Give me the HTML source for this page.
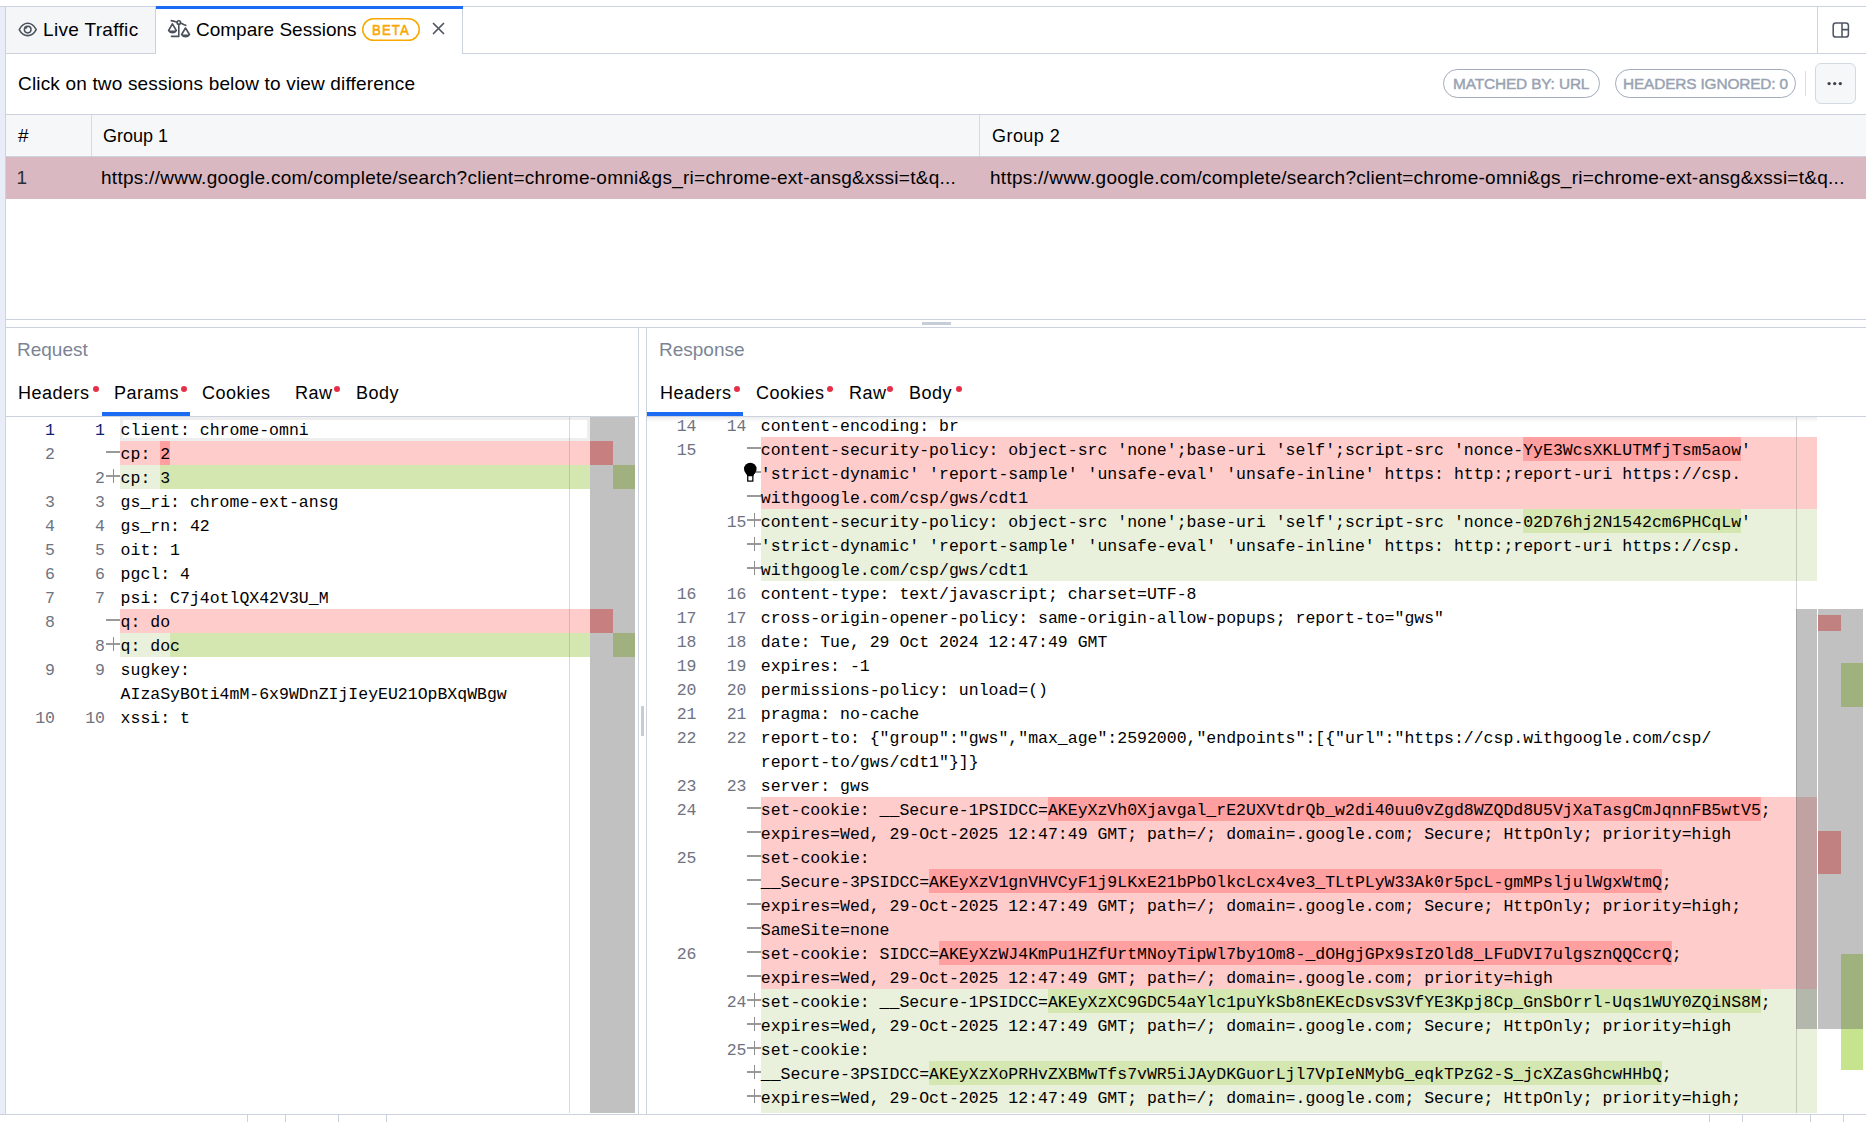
<!DOCTYPE html>
<html><head><meta charset="utf-8"><style>
html,body{margin:0;padding:0;}
body{width:1866px;height:1122px;position:relative;overflow:hidden;background:#fff;font-family:'Liberation Sans', sans-serif;}
body div, body svg{position:absolute;}
.t{white-space:pre;}
</style></head><body>
<div style="left:0px;top:6px;width:1866px;height:1px;background:#cdd3de;"></div>
<div style="left:0px;top:7px;width:5px;height:1107px;background:#e8edf7;"></div>
<div style="left:5px;top:7px;width:1px;height:1107px;background:#cdd3de;"></div>
<div style="left:0px;top:1114px;width:1866px;height:1px;background:#cdd3de;"></div>
<div style="left:247px;top:1115px;width:1px;height:7px;background:#cdd3de;"></div>
<div style="left:285px;top:1115px;width:1px;height:7px;background:#cdd3de;"></div>
<div style="left:338px;top:1115px;width:1px;height:7px;background:#cdd3de;"></div>
<div style="left:386px;top:1115px;width:1px;height:7px;background:#cdd3de;"></div>
<div style="left:1709px;top:1115px;width:1px;height:7px;background:#cdd3de;"></div>
<div style="left:1742px;top:1115px;width:1px;height:7px;background:#cdd3de;"></div>
<div style="left:1810px;top:1115px;width:1px;height:7px;background:#cdd3de;"></div>
<div style="left:1843px;top:1115px;width:1px;height:7px;background:#cdd3de;"></div>
<div style="left:6px;top:7px;width:149px;height:46px;background:#f5f6f8;"></div>
<div style="left:155px;top:7px;width:1px;height:47px;background:#cdd3de;"></div>
<div style="left:6px;top:53px;width:149px;height:1px;background:#cdd3de;"></div>
<div style="left:463px;top:53px;width:1403px;height:1px;background:#cdd3de;"></div>
<div style="left:156px;top:6px;width:307px;height:3px;background:#1b6cf2;"></div>
<div style="left:462px;top:9px;width:1px;height:45px;background:#cdd3de;"></div>
<div style="left:1817px;top:7px;width:1px;height:46px;background:#cdd3de;"></div>
<svg style="left:14px;top:18px" width="28" height="22" viewBox="14 18 28 22"><path d="M19.2 29.6 C21.5 25.3 24.3 23.3 27.7 23.3 C31.1 23.3 33.9 25.3 36.2 29.6 C33.9 33.9 31.1 35.6 27.7 35.6 C24.3 35.6 21.5 33.9 19.2 29.6 Z" fill="none" stroke="#4b515c" stroke-width="1.55" stroke-linejoin="round"/><circle cx="27.7" cy="29.6" r="3.3" fill="none" stroke="#4b515c" stroke-width="1.55"/><path d="M25 28.8 A2.6 2.6 0 0 1 27.2 26.6 L27.4 28.1 A1.2 1.2 0 0 0 26.4 29.1 Z" fill="#4b515c"/></svg>
<svg style="left:160px;top:14px" width="36" height="28" viewBox="160 14 36 28"><g fill="none" stroke="#4b515c" stroke-width="1.6" stroke-linecap="round" stroke-linejoin="round"><path d="M171.3 20.6 C173.5 21 175.3 21.6 177.1 22.1"/><path d="M180.5 23 C182.5 23.8 184 24.6 185.8 25.3"/><circle cx="178.8" cy="22.5" r="1.75"/><path d="M178.8 24.3 V36.4 H171.5"/><path d="M172.4 23.8 L168.6 30.5 C170.6 33.6 174.4 33.6 176.3 30.5 Z"/><path d="M185.5 28 L181.6 34.5 C183.6 37.6 187.5 37.6 189.5 34.5 Z"/></g><path d="M168.6 30.5 C170.6 33.6 174.4 33.6 176.3 30.5 Z" fill="#4b515c"/><path d="M181.6 34.5 C183.6 37.6 187.5 37.6 189.5 34.5 Z" fill="#4b515c"/></svg>
<div class="t" style="left:43px;top:15px;font-family:'Liberation Sans', sans-serif;font-size:19px;line-height:30px;color:#000000;font-weight:400;letter-spacing:0.33px;">Live Traffic</div>
<div class="t" style="left:196px;top:15px;font-family:'Liberation Sans', sans-serif;font-size:19px;line-height:30px;color:#000000;font-weight:400;letter-spacing:0px;">Compare Sessions</div>
<svg style="left:360px;top:16px" width="62" height="27" viewBox="360 16 62 27"><rect x="362.75" y="18.75" width="56.5" height="21.5" rx="10.75" fill="none" stroke="#f9a800" stroke-width="1.5"/></svg>
<div class="t" style="left:371.8px;top:15px;font-family:'Liberation Sans', sans-serif;font-size:15.3px;line-height:30px;color:#f9a600;font-weight:400;letter-spacing:1.3px;-webkit-text-stroke:0.55px #f9a600;transform:scaleX(0.86);transform-origin:0 0">BETA</div>
<svg style="left:432px;top:22px" width="13" height="13" viewBox="0 0 13 13"><path d="M1.5 1.5 L11.5 11.5 M11.5 1.5 L1.5 11.5" stroke="#4f5561" stroke-width="1.7" stroke-linecap="round"/></svg>
<svg style="left:1831px;top:21px" width="20" height="18" viewBox="0 0 20 18"><rect x="2.2" y="2" width="15.2" height="14" rx="2.6" fill="none" stroke="#4f5663" stroke-width="1.55"/><path d="M11 2 V16 M11 8.6 H17.4" stroke="#4f5663" stroke-width="1.55"/></svg>
<div class="t" style="left:18px;top:69px;font-family:'Liberation Sans', sans-serif;font-size:19px;line-height:30px;color:#000000;font-weight:400;letter-spacing:0.17px;">Click on two sessions below to view difference</div>
<div style="left:1443px;top:69px;width:157px;height:29px;background:transparent;border:1px solid #a2abba;border-radius:15px;box-sizing:border-box"></div>
<div class="t" style="left:1453px;top:69px;font-family:'Liberation Sans', sans-serif;font-size:15.4px;line-height:30px;color:#98a2b2;font-weight:400;letter-spacing:-0.13px;-webkit-text-stroke:0.45px #98a2b2">MATCHED BY: URL</div>
<div style="left:1615px;top:69px;width:181px;height:29px;background:transparent;border:1px solid #a2abba;border-radius:15px;box-sizing:border-box"></div>
<div class="t" style="left:1623px;top:69px;font-family:'Liberation Sans', sans-serif;font-size:15.4px;line-height:30px;color:#98a2b2;font-weight:400;letter-spacing:-0.15px;-webkit-text-stroke:0.45px #98a2b2">HEADERS IGNORED: 0</div>
<div style="left:1805px;top:71px;width:1px;height:25px;background:#d9dee6;"></div>
<div style="left:1815px;top:63px;width:41px;height:41px;background:#f6f7f9;border:1px solid #d3d9e2;border-radius:6px;box-sizing:border-box"></div>
<svg style="left:1820px;top:78px" width="28" height="12" viewBox="1820 78 28 12"><circle cx="1829.1" cy="83.6" r="1.65" fill="#3d434d"/><circle cx="1834.7" cy="83.6" r="1.65" fill="#3d434d"/><circle cx="1840.3" cy="83.6" r="1.65" fill="#3d434d"/></svg>
<div style="left:6px;top:114px;width:1860px;height:1px;background:#cdd3de;"></div>
<div style="left:6px;top:115px;width:1860px;height:41px;background:#f6f7f9;"></div>
<div style="left:6px;top:156px;width:1860px;height:1px;background:#cdd3de;"></div>
<div style="left:91px;top:115px;width:1px;height:41px;background:#d5dae3;"></div>
<div style="left:979px;top:115px;width:1px;height:41px;background:#d5dae3;"></div>
<div style="left:6px;top:157px;width:1860px;height:42px;background:#d9b8c2;"></div>
<div class="t" style="left:18px;top:121px;font-family:'Liberation Sans', sans-serif;font-size:19px;line-height:30px;color:#000000;font-weight:400;letter-spacing:0px;">#</div>
<div class="t" style="left:103px;top:121px;font-family:'Liberation Sans', sans-serif;font-size:18px;line-height:30px;color:#000000;font-weight:400;letter-spacing:0px;">Group 1</div>
<div class="t" style="left:992px;top:121px;font-family:'Liberation Sans', sans-serif;font-size:18px;line-height:30px;color:#000000;font-weight:400;letter-spacing:0.45px;">Group 2</div>
<div class="t" style="left:16.5px;top:163px;font-family:'Liberation Sans', sans-serif;font-size:19px;line-height:30px;color:#2a2d33;font-weight:400;letter-spacing:0px;">1</div>
<div class="t" style="left:101px;top:163px;font-family:'Liberation Sans', sans-serif;font-size:19px;line-height:30px;color:#000000;font-weight:400;letter-spacing:0.27px;">https://www.google.com/complete/search?client=chrome-omni&amp;gs_ri=chrome-ext-ansg&amp;xssi=t&amp;q...</div>
<div class="t" style="left:990px;top:163px;font-family:'Liberation Sans', sans-serif;font-size:19px;line-height:30px;color:#000000;font-weight:400;letter-spacing:0.265px;">https://www.google.com/complete/search?client=chrome-omni&amp;gs_ri=chrome-ext-ansg&amp;xssi=t&amp;q...</div>
<div style="left:6px;top:319px;width:1860px;height:1px;background:#cdd3de;"></div>
<div style="left:922px;top:322px;width:29px;height:3px;background:#c6cdd9;"></div>
<div style="left:6px;top:327px;width:1860px;height:1px;background:#cdd3de;"></div>
<div style="left:638px;top:328px;width:1px;height:786px;background:#cdd3de;"></div>
<div style="left:641px;top:706px;width:3px;height:30px;background:#c6cdd9;"></div>
<div style="left:646px;top:328px;width:1px;height:786px;background:#cdd3de;"></div>
<div class="t" style="left:17px;top:335px;font-family:'Liberation Sans', sans-serif;font-size:19px;line-height:30px;color:#7b8494;font-weight:400;letter-spacing:0px;">Request</div>
<div class="t" style="left:659px;top:335px;font-family:'Liberation Sans', sans-serif;font-size:19px;line-height:30px;color:#7b8494;font-weight:400;letter-spacing:0px;">Response</div>
<div class="t" style="left:18px;top:378px;font-family:'Liberation Sans', sans-serif;font-size:18px;line-height:30px;color:#000000;font-weight:400;letter-spacing:0.5px;">Headers</div>
<div style="left:93px;top:386px;width:6px;height:6px;border-radius:50%;background:#e5304a"></div>
<div class="t" style="left:114px;top:378px;font-family:'Liberation Sans', sans-serif;font-size:18px;line-height:30px;color:#000000;font-weight:400;letter-spacing:0.5px;">Params</div>
<div style="left:181px;top:386px;width:6px;height:6px;border-radius:50%;background:#e5304a"></div>
<div class="t" style="left:202px;top:378px;font-family:'Liberation Sans', sans-serif;font-size:18px;line-height:30px;color:#000000;font-weight:400;letter-spacing:0.5px;">Cookies</div>
<div class="t" style="left:295px;top:378px;font-family:'Liberation Sans', sans-serif;font-size:18px;line-height:30px;color:#000000;font-weight:400;letter-spacing:0.5px;">Raw</div>
<div style="left:334px;top:386px;width:6px;height:6px;border-radius:50%;background:#e5304a"></div>
<div class="t" style="left:356px;top:378px;font-family:'Liberation Sans', sans-serif;font-size:18px;line-height:30px;color:#000000;font-weight:400;letter-spacing:0.5px;">Body</div>
<div style="left:102px;top:412px;width:88px;height:4px;background:#1b6cf2;"></div>
<div style="left:6px;top:416px;width:632px;height:1px;background:#cdd3de;"></div>
<div class="t" style="left:660px;top:378px;font-family:'Liberation Sans', sans-serif;font-size:18px;line-height:30px;color:#000000;font-weight:400;letter-spacing:0.5px;">Headers</div>
<div style="left:734px;top:386px;width:6px;height:6px;border-radius:50%;background:#e5304a"></div>
<div class="t" style="left:756px;top:378px;font-family:'Liberation Sans', sans-serif;font-size:18px;line-height:30px;color:#000000;font-weight:400;letter-spacing:0.5px;">Cookies</div>
<div style="left:826.5px;top:386px;width:6px;height:6px;border-radius:50%;background:#e5304a"></div>
<div class="t" style="left:849px;top:378px;font-family:'Liberation Sans', sans-serif;font-size:18px;line-height:30px;color:#000000;font-weight:400;letter-spacing:0.5px;">Raw</div>
<div style="left:886.5px;top:386px;width:6px;height:6px;border-radius:50%;background:#e5304a"></div>
<div class="t" style="left:909px;top:378px;font-family:'Liberation Sans', sans-serif;font-size:18px;line-height:30px;color:#000000;font-weight:400;letter-spacing:0.5px;">Body</div>
<div style="left:955.5px;top:386px;width:6px;height:6px;border-radius:50%;background:#e5304a"></div>
<div style="left:647px;top:412px;width:96px;height:4px;background:#1b6cf2;"></div>
<div style="left:647px;top:416px;width:1219px;height:1px;background:#cdd3de;"></div>
<div style="left:120px;top:417px;width:470px;height:24px;background:#ffffff;border:3px solid #eeeeee;box-sizing:border-box"></div>
<div class="t" style="left:-145px;top:419px;width:200px;text-align:right;font-family:'Liberation Mono', monospace;font-size:16.5px;line-height:24px;color:#0b216f">1</div>
<div class="t" style="left:-95px;top:419px;width:200px;text-align:right;font-family:'Liberation Mono', monospace;font-size:16.5px;line-height:24px;color:#0b216f">1</div>
<div class="t" style="left:120.6px;top:419px;font-family:'Liberation Mono', monospace;font-size:16.5px;line-height:24px;color:#000">client: chrome-omni</div>
<div class="t" style="left:-145px;top:443px;width:200px;text-align:right;font-family:'Liberation Mono', monospace;font-size:16.5px;line-height:24px;color:#6e7380">2</div>
<div style="left:106px;top:451px;width:14px;height:2px;background:#9a9a9a;"></div>
<div style="left:120px;top:441px;width:470px;height:24px;background:#ffcccc;"></div>
<div style="left:160.20px;top:441px;width:9.90px;height:24px;background:#ff9f9f"></div>
<div class="t" style="left:120.6px;top:443px;font-family:'Liberation Mono', monospace;font-size:16.5px;line-height:24px;color:#000">cp: 2</div>
<div class="t" style="left:-95px;top:467px;width:200px;text-align:right;font-family:'Liberation Mono', monospace;font-size:16.5px;line-height:24px;color:#6e7380">2</div>
<div style="left:106px;top:475px;width:14px;height:2px;background:#9a9a9a;"></div>
<div style="left:112.5px;top:469px;width:1.2px;height:14px;background:#8f8f8f;"></div>
<div style="left:120px;top:465px;width:470px;height:24px;background:#e9f0dc;"></div>
<div style="left:160.20px;top:465px;width:429.80px;height:24px;background:#d4e7b0"></div>
<div class="t" style="left:120.6px;top:467px;font-family:'Liberation Mono', monospace;font-size:16.5px;line-height:24px;color:#000">cp: 3</div>
<div class="t" style="left:-145px;top:491px;width:200px;text-align:right;font-family:'Liberation Mono', monospace;font-size:16.5px;line-height:24px;color:#6e7380">3</div>
<div class="t" style="left:-95px;top:491px;width:200px;text-align:right;font-family:'Liberation Mono', monospace;font-size:16.5px;line-height:24px;color:#6e7380">3</div>
<div class="t" style="left:120.6px;top:491px;font-family:'Liberation Mono', monospace;font-size:16.5px;line-height:24px;color:#000">gs_ri: chrome-ext-ansg</div>
<div class="t" style="left:-145px;top:515px;width:200px;text-align:right;font-family:'Liberation Mono', monospace;font-size:16.5px;line-height:24px;color:#6e7380">4</div>
<div class="t" style="left:-95px;top:515px;width:200px;text-align:right;font-family:'Liberation Mono', monospace;font-size:16.5px;line-height:24px;color:#6e7380">4</div>
<div class="t" style="left:120.6px;top:515px;font-family:'Liberation Mono', monospace;font-size:16.5px;line-height:24px;color:#000">gs_rn: 42</div>
<div class="t" style="left:-145px;top:539px;width:200px;text-align:right;font-family:'Liberation Mono', monospace;font-size:16.5px;line-height:24px;color:#6e7380">5</div>
<div class="t" style="left:-95px;top:539px;width:200px;text-align:right;font-family:'Liberation Mono', monospace;font-size:16.5px;line-height:24px;color:#6e7380">5</div>
<div class="t" style="left:120.6px;top:539px;font-family:'Liberation Mono', monospace;font-size:16.5px;line-height:24px;color:#000">oit: 1</div>
<div class="t" style="left:-145px;top:563px;width:200px;text-align:right;font-family:'Liberation Mono', monospace;font-size:16.5px;line-height:24px;color:#6e7380">6</div>
<div class="t" style="left:-95px;top:563px;width:200px;text-align:right;font-family:'Liberation Mono', monospace;font-size:16.5px;line-height:24px;color:#6e7380">6</div>
<div class="t" style="left:120.6px;top:563px;font-family:'Liberation Mono', monospace;font-size:16.5px;line-height:24px;color:#000">pgcl: 4</div>
<div class="t" style="left:-145px;top:587px;width:200px;text-align:right;font-family:'Liberation Mono', monospace;font-size:16.5px;line-height:24px;color:#6e7380">7</div>
<div class="t" style="left:-95px;top:587px;width:200px;text-align:right;font-family:'Liberation Mono', monospace;font-size:16.5px;line-height:24px;color:#6e7380">7</div>
<div class="t" style="left:120.6px;top:587px;font-family:'Liberation Mono', monospace;font-size:16.5px;line-height:24px;color:#000">psi: C7j4otlQX42V3U_M</div>
<div class="t" style="left:-145px;top:611px;width:200px;text-align:right;font-family:'Liberation Mono', monospace;font-size:16.5px;line-height:24px;color:#6e7380">8</div>
<div style="left:106px;top:619px;width:14px;height:2px;background:#9a9a9a;"></div>
<div style="left:120px;top:609px;width:470px;height:24px;background:#ffcccc;"></div>
<div class="t" style="left:120.6px;top:611px;font-family:'Liberation Mono', monospace;font-size:16.5px;line-height:24px;color:#000">q: do</div>
<div class="t" style="left:-95px;top:635px;width:200px;text-align:right;font-family:'Liberation Mono', monospace;font-size:16.5px;line-height:24px;color:#6e7380">8</div>
<div style="left:106px;top:643px;width:14px;height:2px;background:#9a9a9a;"></div>
<div style="left:112.5px;top:637px;width:1.2px;height:14px;background:#8f8f8f;"></div>
<div style="left:120px;top:633px;width:470px;height:24px;background:#e9f0dc;"></div>
<div style="left:170.10px;top:633px;width:419.90px;height:24px;background:#d4e7b0"></div>
<div class="t" style="left:120.6px;top:635px;font-family:'Liberation Mono', monospace;font-size:16.5px;line-height:24px;color:#000">q: doc</div>
<div class="t" style="left:-145px;top:659px;width:200px;text-align:right;font-family:'Liberation Mono', monospace;font-size:16.5px;line-height:24px;color:#6e7380">9</div>
<div class="t" style="left:-95px;top:659px;width:200px;text-align:right;font-family:'Liberation Mono', monospace;font-size:16.5px;line-height:24px;color:#6e7380">9</div>
<div class="t" style="left:120.6px;top:659px;font-family:'Liberation Mono', monospace;font-size:16.5px;line-height:24px;color:#000">sugkey:</div>
<div class="t" style="left:120.6px;top:683px;font-family:'Liberation Mono', monospace;font-size:16.5px;line-height:24px;color:#000">AIzaSyBOti4mM-6x9WDnZIjIeyEU21OpBXqWBgw</div>
<div class="t" style="left:-145px;top:707px;width:200px;text-align:right;font-family:'Liberation Mono', monospace;font-size:16.5px;line-height:24px;color:#6e7380">10</div>
<div class="t" style="left:-95px;top:707px;width:200px;text-align:right;font-family:'Liberation Mono', monospace;font-size:16.5px;line-height:24px;color:#6e7380">10</div>
<div class="t" style="left:120.6px;top:707px;font-family:'Liberation Mono', monospace;font-size:16.5px;line-height:24px;color:#000">xssi: t</div>
<div style="left:569px;top:417px;width:1px;height:696px;background:rgba(127,127,127,0.3);"></div>
<div style="left:590px;top:417px;width:45px;height:696px;background:#c1c1c1;"></div>
<div style="left:590px;top:441px;width:23px;height:24px;background:#c77f7f;"></div>
<div style="left:613px;top:465px;width:22px;height:24px;background:#a0b07f;"></div>
<div style="left:590px;top:609px;width:23px;height:24px;background:#c77f7f;"></div>
<div style="left:613px;top:633px;width:22px;height:24px;background:#a0b07f;"></div>
<div style="left:647px;top:417px;width:1219px;height:696px;overflow:hidden"><div style="left:-647px;top:-417px;width:1866px;height:1122px"><div class="t" style="left:496.5px;top:415px;width:200px;text-align:right;font-family:'Liberation Mono', monospace;font-size:16.5px;line-height:24px;color:#6e7380">14</div><div class="t" style="left:546.5px;top:415px;width:200px;text-align:right;font-family:'Liberation Mono', monospace;font-size:16.5px;line-height:24px;color:#6e7380">14</div><div class="t" style="left:760.8px;top:415px;font-family:'Liberation Mono', monospace;font-size:16.5px;line-height:24px;color:#000">content-encoding: br</div><div class="t" style="left:496.5px;top:439px;width:200px;text-align:right;font-family:'Liberation Mono', monospace;font-size:16.5px;line-height:24px;color:#6e7380">15</div><div style="left:747px;top:447px;width:14px;height:2px;background:#9a9a9a;"></div><div style="left:761px;top:437px;width:1056px;height:24px;background:#ffcccc;"></div><div style="left:1523.10px;top:437px;width:217.80px;height:24px;background:#ff9f9f"></div><div class="t" style="left:760.8px;top:439px;font-family:'Liberation Mono', monospace;font-size:16.5px;line-height:24px;color:#000">content-security-policy: object-src &#x27;none&#x27;;base-uri &#x27;self&#x27;;script-src &#x27;nonce-YyE3WcsXKLUTMfjTsm5aow&#x27;</div><div style="left:747px;top:471px;width:14px;height:2px;background:#9a9a9a;"></div><div style="left:761px;top:461px;width:1056px;height:24px;background:#ffcccc;"></div><div class="t" style="left:760.8px;top:463px;font-family:'Liberation Mono', monospace;font-size:16.5px;line-height:24px;color:#000">&#x27;strict-dynamic&#x27; &#x27;report-sample&#x27; &#x27;unsafe-eval&#x27; &#x27;unsafe-inline&#x27; https: http:;report-uri https://csp.</div><div style="left:747px;top:495px;width:14px;height:2px;background:#9a9a9a;"></div><div style="left:761px;top:485px;width:1056px;height:24px;background:#ffcccc;"></div><div class="t" style="left:760.8px;top:487px;font-family:'Liberation Mono', monospace;font-size:16.5px;line-height:24px;color:#000">withgoogle.com/csp/gws/cdt1</div><div class="t" style="left:546.5px;top:511px;width:200px;text-align:right;font-family:'Liberation Mono', monospace;font-size:16.5px;line-height:24px;color:#6e7380">15</div><div style="left:747px;top:519px;width:14px;height:2px;background:#9a9a9a;"></div><div style="left:753.5px;top:513px;width:1.2px;height:14px;background:#8f8f8f;"></div><div style="left:761px;top:509px;width:1056px;height:24px;background:#e9f0dc;"></div><div style="left:1523.10px;top:509px;width:217.80px;height:24px;background:#d4e7b0"></div><div class="t" style="left:760.8px;top:511px;font-family:'Liberation Mono', monospace;font-size:16.5px;line-height:24px;color:#000">content-security-policy: object-src &#x27;none&#x27;;base-uri &#x27;self&#x27;;script-src &#x27;nonce-02D76hj2N1542cm6PHCqLw&#x27;</div><div style="left:747px;top:543px;width:14px;height:2px;background:#9a9a9a;"></div><div style="left:753.5px;top:537px;width:1.2px;height:14px;background:#8f8f8f;"></div><div style="left:761px;top:533px;width:1056px;height:24px;background:#e9f0dc;"></div><div class="t" style="left:760.8px;top:535px;font-family:'Liberation Mono', monospace;font-size:16.5px;line-height:24px;color:#000">&#x27;strict-dynamic&#x27; &#x27;report-sample&#x27; &#x27;unsafe-eval&#x27; &#x27;unsafe-inline&#x27; https: http:;report-uri https://csp.</div><div style="left:747px;top:567px;width:14px;height:2px;background:#9a9a9a;"></div><div style="left:753.5px;top:561px;width:1.2px;height:14px;background:#8f8f8f;"></div><div style="left:761px;top:557px;width:1056px;height:24px;background:#e9f0dc;"></div><div class="t" style="left:760.8px;top:559px;font-family:'Liberation Mono', monospace;font-size:16.5px;line-height:24px;color:#000">withgoogle.com/csp/gws/cdt1</div><div class="t" style="left:496.5px;top:583px;width:200px;text-align:right;font-family:'Liberation Mono', monospace;font-size:16.5px;line-height:24px;color:#6e7380">16</div><div class="t" style="left:546.5px;top:583px;width:200px;text-align:right;font-family:'Liberation Mono', monospace;font-size:16.5px;line-height:24px;color:#6e7380">16</div><div class="t" style="left:760.8px;top:583px;font-family:'Liberation Mono', monospace;font-size:16.5px;line-height:24px;color:#000">content-type: text/javascript; charset=UTF-8</div><div class="t" style="left:496.5px;top:607px;width:200px;text-align:right;font-family:'Liberation Mono', monospace;font-size:16.5px;line-height:24px;color:#6e7380">17</div><div class="t" style="left:546.5px;top:607px;width:200px;text-align:right;font-family:'Liberation Mono', monospace;font-size:16.5px;line-height:24px;color:#6e7380">17</div><div class="t" style="left:760.8px;top:607px;font-family:'Liberation Mono', monospace;font-size:16.5px;line-height:24px;color:#000">cross-origin-opener-policy: same-origin-allow-popups; report-to=&quot;gws&quot;</div><div class="t" style="left:496.5px;top:631px;width:200px;text-align:right;font-family:'Liberation Mono', monospace;font-size:16.5px;line-height:24px;color:#6e7380">18</div><div class="t" style="left:546.5px;top:631px;width:200px;text-align:right;font-family:'Liberation Mono', monospace;font-size:16.5px;line-height:24px;color:#6e7380">18</div><div class="t" style="left:760.8px;top:631px;font-family:'Liberation Mono', monospace;font-size:16.5px;line-height:24px;color:#000">date: Tue, 29 Oct 2024 12:47:49 GMT</div><div class="t" style="left:496.5px;top:655px;width:200px;text-align:right;font-family:'Liberation Mono', monospace;font-size:16.5px;line-height:24px;color:#6e7380">19</div><div class="t" style="left:546.5px;top:655px;width:200px;text-align:right;font-family:'Liberation Mono', monospace;font-size:16.5px;line-height:24px;color:#6e7380">19</div><div class="t" style="left:760.8px;top:655px;font-family:'Liberation Mono', monospace;font-size:16.5px;line-height:24px;color:#000">expires: -1</div><div class="t" style="left:496.5px;top:679px;width:200px;text-align:right;font-family:'Liberation Mono', monospace;font-size:16.5px;line-height:24px;color:#6e7380">20</div><div class="t" style="left:546.5px;top:679px;width:200px;text-align:right;font-family:'Liberation Mono', monospace;font-size:16.5px;line-height:24px;color:#6e7380">20</div><div class="t" style="left:760.8px;top:679px;font-family:'Liberation Mono', monospace;font-size:16.5px;line-height:24px;color:#000">permissions-policy: unload=()</div><div class="t" style="left:496.5px;top:703px;width:200px;text-align:right;font-family:'Liberation Mono', monospace;font-size:16.5px;line-height:24px;color:#6e7380">21</div><div class="t" style="left:546.5px;top:703px;width:200px;text-align:right;font-family:'Liberation Mono', monospace;font-size:16.5px;line-height:24px;color:#6e7380">21</div><div class="t" style="left:760.8px;top:703px;font-family:'Liberation Mono', monospace;font-size:16.5px;line-height:24px;color:#000">pragma: no-cache</div><div class="t" style="left:496.5px;top:727px;width:200px;text-align:right;font-family:'Liberation Mono', monospace;font-size:16.5px;line-height:24px;color:#6e7380">22</div><div class="t" style="left:546.5px;top:727px;width:200px;text-align:right;font-family:'Liberation Mono', monospace;font-size:16.5px;line-height:24px;color:#6e7380">22</div><div class="t" style="left:760.8px;top:727px;font-family:'Liberation Mono', monospace;font-size:16.5px;line-height:24px;color:#000">report-to: {&quot;group&quot;:&quot;gws&quot;,&quot;max_age&quot;:2592000,&quot;endpoints&quot;:[{&quot;url&quot;:&quot;https://csp.withgoogle.com/csp/</div><div class="t" style="left:760.8px;top:751px;font-family:'Liberation Mono', monospace;font-size:16.5px;line-height:24px;color:#000">report-to/gws/cdt1&quot;}]}</div><div class="t" style="left:496.5px;top:775px;width:200px;text-align:right;font-family:'Liberation Mono', monospace;font-size:16.5px;line-height:24px;color:#6e7380">23</div><div class="t" style="left:546.5px;top:775px;width:200px;text-align:right;font-family:'Liberation Mono', monospace;font-size:16.5px;line-height:24px;color:#6e7380">23</div><div class="t" style="left:760.8px;top:775px;font-family:'Liberation Mono', monospace;font-size:16.5px;line-height:24px;color:#000">server: gws</div><div class="t" style="left:496.5px;top:799px;width:200px;text-align:right;font-family:'Liberation Mono', monospace;font-size:16.5px;line-height:24px;color:#6e7380">24</div><div style="left:747px;top:807px;width:14px;height:2px;background:#9a9a9a;"></div><div style="left:761px;top:797px;width:1056px;height:24px;background:#ffcccc;"></div><div style="left:1047.90px;top:797px;width:712.80px;height:24px;background:#ff9f9f"></div><div class="t" style="left:760.8px;top:799px;font-family:'Liberation Mono', monospace;font-size:16.5px;line-height:24px;color:#000">set-cookie: __Secure-1PSIDCC=AKEyXzVh0Xjavgal_rE2UXVtdrQb_w2di40uu0vZgd8WZQDd8U5VjXaTasgCmJqnnFB5wtV5;</div><div style="left:747px;top:831px;width:14px;height:2px;background:#9a9a9a;"></div><div style="left:761px;top:821px;width:1056px;height:24px;background:#ffcccc;"></div><div class="t" style="left:760.8px;top:823px;font-family:'Liberation Mono', monospace;font-size:16.5px;line-height:24px;color:#000">expires=Wed, 29-Oct-2025 12:47:49 GMT; path=/; domain=.google.com; Secure; HttpOnly; priority=high</div><div class="t" style="left:496.5px;top:847px;width:200px;text-align:right;font-family:'Liberation Mono', monospace;font-size:16.5px;line-height:24px;color:#6e7380">25</div><div style="left:747px;top:855px;width:14px;height:2px;background:#9a9a9a;"></div><div style="left:761px;top:845px;width:1056px;height:24px;background:#ffcccc;"></div><div class="t" style="left:760.8px;top:847px;font-family:'Liberation Mono', monospace;font-size:16.5px;line-height:24px;color:#000">set-cookie:</div><div style="left:747px;top:879px;width:14px;height:2px;background:#9a9a9a;"></div><div style="left:761px;top:869px;width:1056px;height:24px;background:#ffcccc;"></div><div style="left:929.10px;top:869px;width:732.60px;height:24px;background:#ff9f9f"></div><div class="t" style="left:760.8px;top:871px;font-family:'Liberation Mono', monospace;font-size:16.5px;line-height:24px;color:#000">__Secure-3PSIDCC=AKEyXzV1gnVHVCyF1j9LKxE21bPbOlkcLcx4ve3_TLtPLyW33Ak0r5pcL-gmMPsljulWgxWtmQ;</div><div style="left:747px;top:903px;width:14px;height:2px;background:#9a9a9a;"></div><div style="left:761px;top:893px;width:1056px;height:24px;background:#ffcccc;"></div><div class="t" style="left:760.8px;top:895px;font-family:'Liberation Mono', monospace;font-size:16.5px;line-height:24px;color:#000">expires=Wed, 29-Oct-2025 12:47:49 GMT; path=/; domain=.google.com; Secure; HttpOnly; priority=high;</div><div style="left:747px;top:927px;width:14px;height:2px;background:#9a9a9a;"></div><div style="left:761px;top:917px;width:1056px;height:24px;background:#ffcccc;"></div><div class="t" style="left:760.8px;top:919px;font-family:'Liberation Mono', monospace;font-size:16.5px;line-height:24px;color:#000">SameSite=none</div><div class="t" style="left:496.5px;top:943px;width:200px;text-align:right;font-family:'Liberation Mono', monospace;font-size:16.5px;line-height:24px;color:#6e7380">26</div><div style="left:747px;top:951px;width:14px;height:2px;background:#9a9a9a;"></div><div style="left:761px;top:941px;width:1056px;height:24px;background:#ffcccc;"></div><div style="left:939.00px;top:941px;width:732.60px;height:24px;background:#ff9f9f"></div><div class="t" style="left:760.8px;top:943px;font-family:'Liberation Mono', monospace;font-size:16.5px;line-height:24px;color:#000">set-cookie: SIDCC=AKEyXzWJ4KmPu1HZfUrtMNoyTipWl7by1Om8-_dOHgjGPx9sIzOld8_LFuDVI7ulgsznQQCcrQ;</div><div style="left:747px;top:975px;width:14px;height:2px;background:#9a9a9a;"></div><div style="left:761px;top:965px;width:1056px;height:24px;background:#ffcccc;"></div><div class="t" style="left:760.8px;top:967px;font-family:'Liberation Mono', monospace;font-size:16.5px;line-height:24px;color:#000">expires=Wed, 29-Oct-2025 12:47:49 GMT; path=/; domain=.google.com; priority=high</div><div class="t" style="left:546.5px;top:991px;width:200px;text-align:right;font-family:'Liberation Mono', monospace;font-size:16.5px;line-height:24px;color:#6e7380">24</div><div style="left:747px;top:999px;width:14px;height:2px;background:#9a9a9a;"></div><div style="left:753.5px;top:993px;width:1.2px;height:14px;background:#8f8f8f;"></div><div style="left:761px;top:989px;width:1056px;height:24px;background:#e9f0dc;"></div><div style="left:1047.90px;top:989px;width:712.80px;height:24px;background:#d4e7b0"></div><div class="t" style="left:760.8px;top:991px;font-family:'Liberation Mono', monospace;font-size:16.5px;line-height:24px;color:#000">set-cookie: __Secure-1PSIDCC=AKEyXzXC9GDC54aYlc1puYkSb8nEKEcDsvS3VfYE3Kpj8Cp_GnSbOrrl-Uqs1WUY0ZQiNS8M;</div><div style="left:747px;top:1023px;width:14px;height:2px;background:#9a9a9a;"></div><div style="left:753.5px;top:1017px;width:1.2px;height:14px;background:#8f8f8f;"></div><div style="left:761px;top:1013px;width:1056px;height:24px;background:#e9f0dc;"></div><div class="t" style="left:760.8px;top:1015px;font-family:'Liberation Mono', monospace;font-size:16.5px;line-height:24px;color:#000">expires=Wed, 29-Oct-2025 12:47:49 GMT; path=/; domain=.google.com; Secure; HttpOnly; priority=high</div><div class="t" style="left:546.5px;top:1039px;width:200px;text-align:right;font-family:'Liberation Mono', monospace;font-size:16.5px;line-height:24px;color:#6e7380">25</div><div style="left:747px;top:1047px;width:14px;height:2px;background:#9a9a9a;"></div><div style="left:753.5px;top:1041px;width:1.2px;height:14px;background:#8f8f8f;"></div><div style="left:761px;top:1037px;width:1056px;height:24px;background:#e9f0dc;"></div><div class="t" style="left:760.8px;top:1039px;font-family:'Liberation Mono', monospace;font-size:16.5px;line-height:24px;color:#000">set-cookie:</div><div style="left:747px;top:1071px;width:14px;height:2px;background:#9a9a9a;"></div><div style="left:753.5px;top:1065px;width:1.2px;height:14px;background:#8f8f8f;"></div><div style="left:761px;top:1061px;width:1056px;height:24px;background:#e9f0dc;"></div><div style="left:929.10px;top:1061px;width:732.60px;height:24px;background:#d4e7b0"></div><div class="t" style="left:760.8px;top:1063px;font-family:'Liberation Mono', monospace;font-size:16.5px;line-height:24px;color:#000">__Secure-3PSIDCC=AKEyXzXoPRHvZXBMwTfs7vWR5iJAyDKGuorLjl7VpIeNMybG_eqkTPzG2-S_jcXZasGhcwHHbQ;</div><div style="left:747px;top:1095px;width:14px;height:2px;background:#9a9a9a;"></div><div style="left:753.5px;top:1089px;width:1.2px;height:14px;background:#8f8f8f;"></div><div style="left:761px;top:1085px;width:1056px;height:24px;background:#e9f0dc;"></div><div class="t" style="left:760.8px;top:1087px;font-family:'Liberation Mono', monospace;font-size:16.5px;line-height:24px;color:#000">expires=Wed, 29-Oct-2025 12:47:49 GMT; path=/; domain=.google.com; Secure; HttpOnly; priority=high;</div><div style="left:747px;top:1119px;width:14px;height:2px;background:#9a9a9a;"></div><div style="left:753.5px;top:1113px;width:1.2px;height:14px;background:#8f8f8f;"></div><div style="left:761px;top:1109px;width:1056px;height:24px;background:#e9f0dc;"></div><div class="t" style="left:760.8px;top:1111px;font-family:'Liberation Mono', monospace;font-size:16.5px;line-height:24px;color:#000"></div></div></div>
<svg style="left:743px;top:462px" width="15" height="21" viewBox="0 0 15 21"><circle cx="7.3" cy="7" r="6.3" fill="#000"/><path d="M2.6 10.5 L4.6 14.2 H10 L12 10.5 Z" fill="#000"/><rect x="4.75" y="13.6" width="5.1" height="5.5" fill="#fff" stroke="#000" stroke-width="1.25"/></svg>
<div style="left:1796px;top:417px;width:1px;height:696px;background:rgba(127,127,127,0.35);"></div>
<div style="left:1796px;top:609px;width:21px;height:420px;background:rgba(100,100,100,0.4);"></div>
<div style="left:1818px;top:615px;width:23px;height:16px;background:#ff9494;"></div>
<div style="left:1841px;top:663px;width:22px;height:44px;background:#c6e48e;"></div>
<div style="left:1818px;top:831px;width:23px;height:43px;background:#ff9494;"></div>
<div style="left:1841px;top:954px;width:22px;height:116px;background:#c6e48e;"></div>
<div style="left:1818px;top:609px;width:45px;height:420px;background:rgba(100,100,100,0.4);"></div>
<div style="left:647px;top:417px;width:1170px;height:5px;background:linear-gradient(rgba(205,205,205,0.35),rgba(221,221,221,0))"></div>
</body></html>
